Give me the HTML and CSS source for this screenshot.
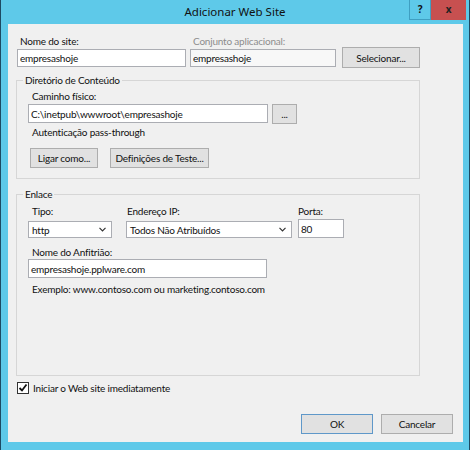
FILE: index.html
```html
<!DOCTYPE html>
<html lang="pt">
<head>
    <meta charset="UTF-8">
    <title>Adicionar Web Site</title>
    <link rel="stylesheet" href="styles.css">
</head>
<body>
    <div class="window">
        <div class="titlebar">
            <div></div>
            <div class="title">Adicionar Web Site</div>
            <div class="caption-buttons">
                <span class="cap-help">?</span>
                <span class="cap-close">x</span>
            </div>
        </div>

        <div class="client">
            <div class="top-row">
                <div class="field site-name">
                    <label>Nome do site:</label>
                    <input type="text" class="textbox" value="empresashoje">
                </div>
                <div class="field app-pool">
                    <label class="disabled">Conjunto aplicacional:</label>
                    <input type="text" class="textbox readonly" value="empresashoje" readonly>
                </div>
                <button class="btn btn-select">Selecionar...</button>
            </div>

            <fieldset class="group content-dir">
                <legend>Diretório de Conteúdo</legend>
                <div class="group-body">
                    <label class="cap">Caminho físico:</label>
                    <div class="path-row">
                        <input type="text" class="textbox path" value="C:\inetpub\wwwroot\empresashoje">
                        <button class="btn btn-browse">...</button>
                    </div>
                    <div class="cap note">Autenticação pass-through</div>
                    <div class="btn-row">
                        <button class="btn btn-connect">Ligar como...</button>
                        <button class="btn btn-test">Definições de Teste...</button>
                    </div>
                </div>
            </fieldset>

            <fieldset class="group binding">
                <legend>Enlace</legend>
                <div class="group-body">
                    <div class="binding-row">
                        <div class="field type">
                            <label>Tipo:</label>
                            <div class="dropdown">
                                <span>http</span>
                                <svg width="7" height="5" viewBox="0 0 7 5"><polyline points="0.5,0.8 3.5,3.8 6.5,0.8" fill="none" stroke="#333" stroke-width="1.2"/></svg>
                            </div>
                        </div>
                        <div class="field ip">
                            <label>Endereço IP:</label>
                            <div class="dropdown">
                                <span>Todos Não Atribuídos</span>
                                <svg width="7" height="5" viewBox="0 0 7 5"><polyline points="0.5,0.8 3.5,3.8 6.5,0.8" fill="none" stroke="#333" stroke-width="1.2"/></svg>
                            </div>
                        </div>
                        <div class="field port">
                            <label>Porta:</label>
                            <input type="text" class="textbox" value="80">
                        </div>
                    </div>
                    <label class="cap host-label">Nome do Anfitrião:</label>
                    <input type="text" class="textbox host" value="empresashoje.pplware.com">
                    <div class="cap example">Exemplo: www.contoso.com ou marketing.contoso.com</div>
                </div>
            </fieldset>

            <div class="check-row">
                <span class="checkbox">
                    <svg width="10" height="10" viewBox="0 0 10 10"><polyline points="1.5,5 4,7.5 8.5,1.5" fill="none" stroke="#111" stroke-width="1.8"/></svg>
                </span>
                <span>Iniciar o Web site imediatamente</span>
            </div>

            <div class="dialog-buttons">
                <button class="btn btn-ok">OK</button>
                <button class="btn">Cancelar</button>
            </div>
        </div>
    </div>
</body>
</html>
```

FILE: styles.css
```css
body {
    margin: 0;
    font-family: Lato, "Noto Sans", sans-serif;
    font-size: 10px;
    line-height: 14px;
    letter-spacing: -0.2px;
    color: #111;
}
.window {
    width: 470px;
    height: 450px;
    box-sizing: border-box;
    background: #5ec9e9;
    border-left: 1px solid #1d4a63;
    border-right: 1px solid #1d4a63;
}

/* title bar */
.titlebar {
    height: 24px;
    display: grid;
    grid-template-columns: 1fr auto 1fr;
}
.title {
    font-family: "Noto Sans", sans-serif;
    font-size: 11.5px;
    line-height: 24px;
    letter-spacing: 0;
    color: #111;
}
.caption-buttons {
    justify-self: end;
    display: flex;
    margin-right: 3px;
}
.cap-help, .cap-close {
    height: 20px;
    line-height: 19px;
    text-align: center;
    font-family: "Noto Sans", sans-serif;
    font-weight: bold;
    font-size: 10px;
}
.cap-help {
    width: 22px;
    border: 1px solid #3f9fc2;
    border-top: none;
    box-sizing: border-box;
}
.cap-close {
    width: 35px;
    background: #c75050;
    color: #222;
}

/* client area */
.client {
    margin: 0 6px 0 7px;
    height: 418px;
    box-sizing: border-box;
    background: #f0f0f0;
    padding: 10px 0 0 9px;
}
label {
    display: block;
}
.disabled {
    color: #8d8d8d;
}
.textbox {
    display: block;
    box-sizing: border-box;
    width: 100%;
    height: 18px;
    margin: 1px 0 0;
    padding: 0 2px;
    border: 1px solid #abadb3;
    background: #fff;
    font: inherit;
    letter-spacing: inherit;
    color: #111;
    outline: none;
}
.textbox.readonly {
    background: #f8f8f8;
}
.btn {
    box-sizing: border-box;
    height: 20px;
    padding: 0;
    border: 1px solid #adadad;
    background: #e1e1e1;
    font: inherit;
    letter-spacing: inherit;
    color: #111;
    white-space: nowrap;
}

.top-row {
    display: flex;
    align-items: flex-end;
}
.field.site-name {
    width: 169px;
    margin-right: 4px;
}
.field.site-name label {
    padding-left: 3px;
}
.field.app-pool {
    width: 146px;
    margin-right: 6px;
}
.field.app-pool label {
    padding-left: 3px;
}
.btn-select {
    width: 78px;
    height: 21px;
    margin-bottom: -1px;
}

/* group boxes */
.group {
    box-sizing: border-box;
    width: 404px;
    margin: 6px 0 0 -1px;
    padding: 0;
    border: 1px solid #d6d6d6;
    min-inline-size: 0;
}
.group legend {
    margin-left: 6px;
    padding: 0 2px;
    line-height: 14px;
}
.group-body {
    padding: 0 0 10px 11px;
}
.cap {
    padding-left: 4px;
}
.content-dir label.cap {
    margin-top: 2px;
}
.path-row {
    display: flex;
    align-items: flex-start;
    gap: 4px;
    margin-top: 1px;
}
.textbox.path {
    width: 240px;
    height: 19px;
    margin: 0;
}
.btn-browse {
    width: 25px;
    line-height: 10px;
}
.note {
    margin-top: 1px;
}
.btn-row {
    display: flex;
    gap: 12px;
    margin: 9px 0 0 2px;
}
.btn-connect {
    width: 68px;
}
.btn-test {
    width: 99px;
}

.binding {
    margin-top: 8px;
}
.binding .group-body {
    padding-bottom: 79px;
}
.binding-row {
    display: flex;
    align-items: flex-start;
    margin-top: 3px;
}
.field.type {
    width: 84px;
    margin-right: 14px;
}
.field.type label {
    padding-left: 4px;
}
.field.ip {
    width: 166px;
    margin-right: 6px;
}
.field.ip label {
    padding-left: 1px;
}
.field.port {
    width: 46px;
}
.field.port .textbox {
    height: 19px;
    margin-top: 1px;
}
.dropdown {
    box-sizing: border-box;
    height: 17px;
    margin-top: 3px;
    padding: 0 5px 0 3px;
    border: 1px solid #abadb3;
    background: #fff;
    display: flex;
    align-items: center;
    justify-content: space-between;
}
.host-label {
    margin-top: 7px;
}
.textbox.host {
    width: 239px;
    height: 19px;
    margin: 0;
}
.example {
    margin-top: 4px;
}

.check-row {
    display: flex;
    align-items: center;
    gap: 4px;
    margin-top: 5px;
}
.checkbox {
    box-sizing: border-box;
    width: 12px;
    height: 12px;
    border: 1px solid #333;
    background: #fff;
    display: flex;
    align-items: center;
    justify-content: center;
}

.dialog-buttons {
    display: flex;
    justify-content: flex-end;
    gap: 8px;
    margin: 19px 10px 0 0;
}
.dialog-buttons .btn {
    width: 72px;
}
.btn-ok {
    border-color: #5f98c9;
}
```
